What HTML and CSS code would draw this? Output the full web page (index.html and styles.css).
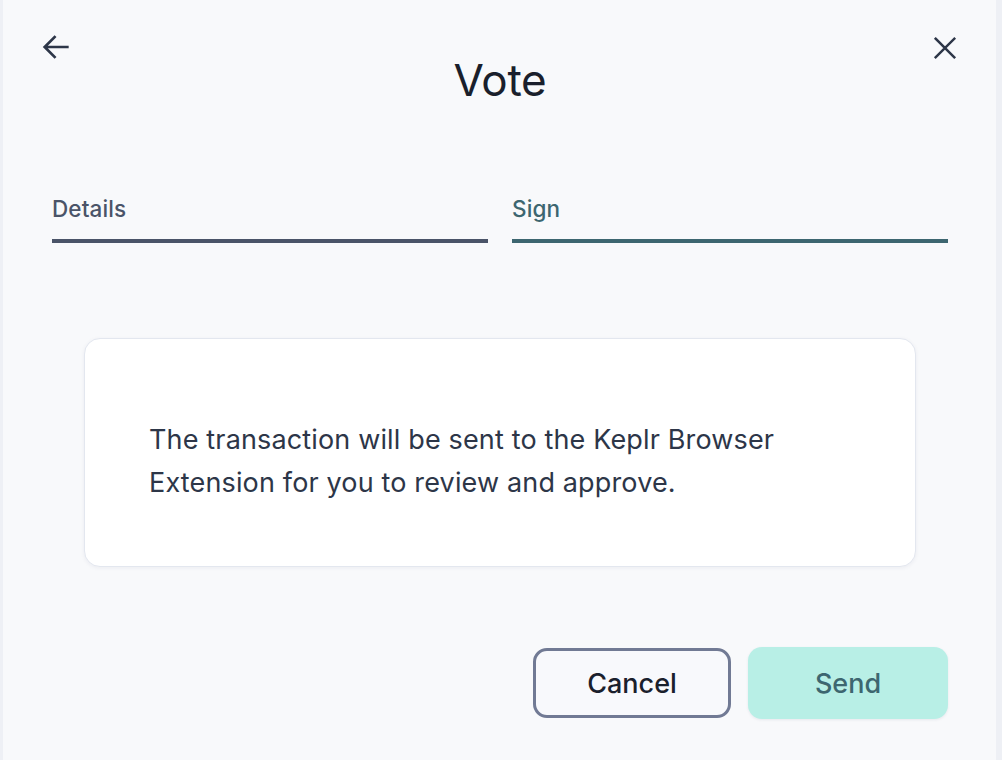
FILE: index.html
```html
<!DOCTYPE html>
<html>
<head>
<meta charset="utf-8">
<link rel="stylesheet" href="styles.css">
</head>
<body>
<div class="frame">
  <div class="panel">
    <div class="header">
      <button class="icon-btn back" aria-label="Back">
        <svg width="34" height="34" viewBox="0 0 24 24" fill="none" stroke="#2d3648" stroke-width="1.9" stroke-linecap="square"><path d="M20 12H5M11 5l-7 7 7 7"/></svg>
      </button>
      <h1 class="title">Vote</h1>
      <button class="icon-btn close" aria-label="Close">
        <svg width="28" height="28" viewBox="0 0 24 24" fill="none" stroke="#2d3648" stroke-width="2.1" stroke-linecap="square"><path d="M4 4l16 16M20 4L4 20"/></svg>
      </button>
    </div>
    <div class="tabs">
      <div class="tab tab-details">Details</div>
      <div class="tab tab-sign">Sign</div>
    </div>
    <div class="card">
      <p class="message">The transaction will be sent to the Keplr Browser Extension for you to review and approve.</p>
    </div>
    <div class="actions">
      <button class="btn btn-cancel">Cancel</button>
      <button class="btn btn-send">Send</button>
    </div>
  </div>
</div>
</body>
</html>
```
FILE: styles.css
```css
* { box-sizing: border-box; }
html, body { margin: 0; padding: 0; }
body {
  background: #eef0f5;
  font-family: Inter, "Noto Sans", sans-serif;
  color: #1a202c;
}
.frame {
  display: flex;
  height: 760px;
  padding: 0 6px 0 3px;
}
.panel {
  flex: 1;
  background: #f8f9fb;
  padding: 0 48px 0 49px;
  display: flex;
  flex-direction: column;
}
.header {
  display: grid;
  grid-template-columns: 1fr auto 1fr;
  align-items: start;
  padding-top: 30px;
}
.icon-btn {
  background: none;
  border: 0;
  padding: 0;
  display: flex;
  cursor: pointer;
}
.back { margin-left: -13px; justify-self: start; }
.close { justify-self: end; margin-top: 4px; margin-right: -11px; }
.title {
  margin: 24px 0 0;
  font-size: 44px;
  font-weight: 400;
  line-height: 52px;
  color: #1a1f2c;
  letter-spacing: -0.3px;
}
.tabs {
  display: grid;
  grid-template-columns: 1fr 1fr;
  column-gap: 24px;
  margin-top: 90px;
}
.tab {
  font-size: 22.5px;
  font-weight: 500;
  line-height: 26px;
  padding-bottom: 17px;
  border-bottom: 4px solid;
  letter-spacing: 0.1px;
}
.tab-details { color: #4a5468; border-color: #4a5468; }
.tab-sign { color: #3d6670; border-color: #3d6670; }
.card {
  margin: 95px 32px 0;
  background: #ffffff;
  border: 1px solid #e3e7ef;
  border-radius: 16px;
  box-shadow: 0 1px 4px rgba(30, 40, 80, 0.06);
  padding: 79px 64px 62px;
}
.message {
  margin: 0;
  font-size: 27px;
  line-height: 43px;
  letter-spacing: 0.15px;
  color: #2d3648;
}
.actions {
  display: flex;
  justify-content: flex-end;
  gap: 17px;
  margin-top: 80px;
  align-items: center;
}
.btn {
  font-family: Inter, "Noto Sans", sans-serif;
  font-size: 27px;
  font-weight: 500;
  border-radius: 14px;
  cursor: pointer;
}
.btn-cancel {
  width: 198px;
  height: 70px;
  background: #f8f9fc;
  border: 3px solid #717a94;
  color: #1a202c;
}
.btn-send {
  width: 200px;
  height: 72px;
  background: #b8efe6;
  border: 0;
  color: #3d6670;
  box-shadow: 0 1px 3px rgba(30, 40, 80, 0.08);
}
```
